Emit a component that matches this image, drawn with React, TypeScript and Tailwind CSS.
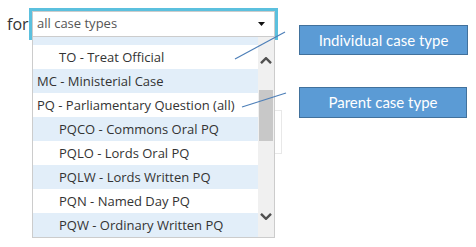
import React from "react";

type Item = { label: string; child: boolean };

const items: Item[] = [
  { label: "TO - Treat Official", child: true },
  { label: "MC - Ministerial Case", child: false },
  { label: "PQ - Parliamentary Question (all)", child: false },
  { label: "PQCO - Commons Oral PQ", child: true },
  { label: "PQLO - Lords Oral PQ", child: true },
  { label: "PQLW - Lords Written PQ", child: true },
  { label: "PQN - Named Day PQ", child: true },
  { label: "PQW - Ordinary Written PQ", child: true },
];

function Chevron({ up }: { up: boolean }) {
  return (
    <svg width="12" height="7" viewBox="0 0 12 7" className="block self-center">
      <path
        d={up ? "M1 6.2 L6 1.2 L11 6.2" : "M1 0.8 L6 5.8 L11 0.8"}
        fill="none"
        stroke="#505050"
        strokeWidth="2.4"
      />
    </svg>
  );
}

export default function App() {
  return (
    <div className="relative w-[476px] h-[247px] bg-white overflow-hidden font-['Open_Sans',sans-serif] text-[#333]">
      <div className="absolute left-[262px] top-[110px] w-[20px] h-[44px] border border-[#e8e8e8] z-0" />

      <div className="relative z-10 flex items-start pl-[7px] pt-[11px]">
        <span className="w-[25px] text-[16px] leading-[26px] text-[#333]">for</span>
        <div className="flex flex-col w-[243px]">
          <div className="h-[26px] border border-[#cccccc] bg-white shadow-[0_0_0_3px_#5bc0de] flex items-center justify-between pl-[4px] pr-[9px]">
            <span className="text-[13px] text-[#555]">all case types</span>
            <svg width="7" height="4" viewBox="0 0 7 4" className="block">
              <polygon points="0,0 7,0 3.5,4" fill="#111" />
            </svg>
          </div>
          <div className="flex border-x border-b border-[#cccccc] bg-white h-[201px]">
            <div className="flex flex-col w-[225px]">
              <div className="h-[8px] bg-[#e2eef9]" />
              {items.map((it, i) => (
                <div
                  key={it.label}
                  className={
                    "h-[24px] text-[13px] leading-[24px] whitespace-nowrap " +
                    (i % 2 === 1 ? "bg-[#e2eef9] " : "bg-white ") +
                    (it.child ? "pl-[26px]" : "pl-[4px]")
                  }
                >
                  {it.label}
                </div>
              ))}
            </div>
            <div className="flex flex-col w-[16px] bg-[#f0f0f0] pt-[20px]">
              <Chevron up={true} />
              <div className="mt-[26px] h-[51px] w-[14px] self-center bg-[#c8c8c8]" />
              <div className="mt-[72px] flex flex-col">
                <Chevron up={false} />
              </div>
            </div>
          </div>
        </div>
      </div>

      <svg className="absolute inset-0 z-20 pointer-events-none" width="476" height="247">
        <line x1="235" y1="59" x2="285" y2="32" stroke="#4d7fb8" strokeWidth="1.2" />
        <line x1="242" y1="107" x2="286" y2="93" stroke="#4d7fb8" strokeWidth="1.2" />
      </svg>

      <div className="absolute z-20 left-[299px] top-[25px] w-[169px] h-[30px] bg-[#5b9bd5] border border-[#41719c] flex items-center justify-center text-white text-[15px] font-['Lato',sans-serif]">
        Individual case type
      </div>
      <div className="absolute z-20 left-[299px] top-[87px] w-[168px] h-[31px] bg-[#5b9bd5] border border-[#41719c] flex items-center justify-center text-white text-[15px] font-['Lato',sans-serif]">
        Parent case type
      </div>
    </div>
  );
}
